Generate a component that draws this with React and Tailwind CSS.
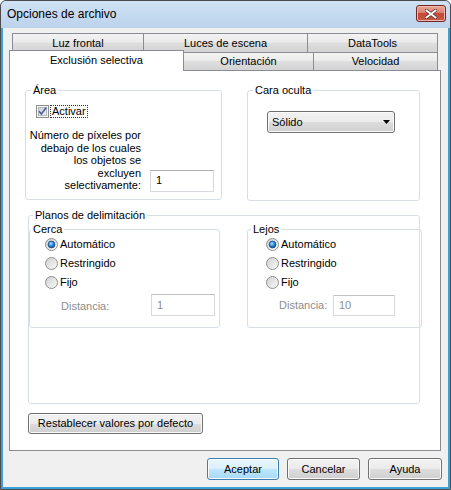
import React from "react";

const tabBg = "bg-[linear-gradient(#f3f3f3,#ebebeb_45%,#dedede_50%,#d3d3d3)]";
const btnBg = "bg-[linear-gradient(#f2f2f2,#ebebeb_50%,#dddddd_50%,#cfcfcf)]";
const defBg = "bg-[linear-gradient(#eaf6fd,#d9f0fc_50%,#bee6fd_50%,#a7d9f5)]";

const Checkbox = () => (
    <svg width="13" height="13" viewBox="0 0 13 13" className="shrink-0">
        <defs>
            <linearGradient id="cbfill" x1="0" y1="0" x2="1" y2="1">
                <stop offset="0" stopColor="#c9cdd2" />
                <stop offset="1" stopColor="#f4f4f4" />
            </linearGradient>
        </defs>
        <rect x="0.5" y="0.5" width="12" height="12" fill="#f6f6f6" stroke="#8e8f8f" />
        <rect x="2.5" y="2.5" width="8" height="8" fill="url(#cbfill)" stroke="#b4b8bd" />
        <path d="M3 6.3 L5.4 9 L10.2 2.6" fill="none" stroke="#4b62a3" strokeWidth="1.7" />
    </svg>
);

const Radio = ({ checked }) => (
    <svg width="13" height="13" viewBox="0 0 13 13" className="shrink-0">
        <defs>
            <linearGradient id="rbfill" x1="0" y1="0" x2="1" y2="1">
                <stop offset="0" stopColor="#cfcfcf" />
                <stop offset="1" stopColor="#fbfbfb" />
            </linearGradient>
            <radialGradient id="rbdot" cx="0.4" cy="0.35" r="0.75">
                <stop offset="0" stopColor="#a6e0ff" />
                <stop offset="0.5" stopColor="#2a8ade" />
                <stop offset="1" stopColor="#0b3f7c" />
            </radialGradient>
        </defs>
        <circle cx="6.5" cy="6.5" r="6" fill="url(#rbfill)" stroke="#8e8f8f" />
        {checked && (
            <circle cx="6.5" cy="6.5" r="3.4" fill="url(#rbdot)" stroke="#19467e" strokeWidth="0.8" />
        )}
    </svg>
);

const Group = ({ label, labelLeft, className, children }) => (
    <div className={`relative border border-[#d5dfe5] rounded-[3px] shrink-0 ${className}`}>
        <span className={`absolute -top-[7px] bg-white px-[2px] leading-[13px] ${labelLeft}`}>
            {label}
        </span>
        {children}
    </div>
);

const TextBox = ({ value, disabled, className }) => (
    <div
        className={`flex items-center pl-[5px] bg-white border shrink-0 ${
            disabled
                ? "border-[#d9d9d9] border-t-[#c2c2c2] text-[#8d8d8d]"
                : "border-[#d5d9df] border-t-[#abadb3]"
        } ${className}`}
    >
        {value}
    </div>
);

const RadioRow = ({ label, checked }) => (
    <div className="h-[19px] flex items-center gap-[2px]">
        <Radio checked={checked} />
        <span>{label}</span>
    </div>
);

const Button = ({ label, isDefault, className }) => (
    <div
        className={`flex items-center justify-center rounded-[3px] border shadow-[inset_0_0_0_1px_#fbfbfb] shrink-0 ${
            isDefault ? `border-[#3c7fb1] ${defBg}` : `border-[#707070] ${btnBg}`
        } ${className}`}
    >
        {label}
    </div>
);

const CloseButton = () => (
    <div className="self-start mt-[4px] w-[30px] h-[17px] rounded-[3px] border border-[#6e2a22] bg-[linear-gradient(#e9a797,#d98272_45%,#c7493a_50%,#c45a45)] shadow-[inset_0_0_0_1px_#f1b8a9] flex items-center justify-center">
        <svg width="12" height="10" viewBox="0 0 12 10">
            <path d="M1.5 1.5 L10.5 8.5 M10.5 1.5 L1.5 8.5" stroke="#5a2a24" strokeWidth="3.4" strokeLinecap="square" />
            <path d="M1.5 1.5 L10.5 8.5 M10.5 1.5 L1.5 8.5" stroke="#ffffff" strokeWidth="1.9" strokeLinecap="square" />
        </svg>
    </div>
);

const Tab = ({ label, className }) => (
    <div
        className={`flex items-center justify-center border border-b-0 border-[#898c95] shrink-0 ${tabBg} ${className}`}
    >
        {label}
    </div>
);

const pixelLines = [
    "Número de píxeles por",
    "debajo de los cuales",
    "los objetos se",
    "excluyen",
    "selectivamente:",
];

export default function App() {
    return (
        <div className="w-[451px] h-[490px] bg-white font-['Liberation_Sans',Arial,sans-serif] text-[11px] leading-[13px] text-black">
            <div className="w-[451px] h-[490px] flex flex-col border border-[#4b4b4b] rounded-t-[6px] overflow-hidden bg-[#3aa0dc]">
                {/* title bar */}
                <div className="h-[27px] shrink-0 flex items-center justify-between pl-[6px] pr-[4px] bg-[linear-gradient(#d0e1f4,#bcd3ec)]">
                    <span className="text-[12px] leading-[15px]">Opciones de archivo</span>
                    <CloseButton />
                </div>

                <div className="flex-1 mx-[2px] mb-[2px] bg-[#f0f0f0] flex flex-col">
                    {/* tabs */}
                    <div className="mt-[5px] ml-[6px] w-[432px] flex flex-col">
                        <div className="flex h-[19px] pl-[3px]">
                            <Tab label="Luz frontal" className="w-[132px]" />
                            <Tab label="Luces de escena" className="-ml-px w-[165px]" />
                            <Tab label="DataTools" className="-ml-px w-[131px]" />
                        </div>
                        <div className="flex items-end h-[18px]">
                            <div className="relative z-10 w-[175px] h-[21px] -mb-px border border-b-0 border-[#898c95] bg-white flex items-center justify-center pb-[1px]">
                                Exclusión selectiva
                            </div>
                            <Tab label="Orientación" className="-ml-px w-[131px] h-[18px]" />
                            <Tab label="Velocidad" className="-ml-px w-[125px] h-[18px]" />
                        </div>
                    </div>

                    {/* panel */}
                    <div className="ml-[6px] w-[432px] h-[381px] border border-[#898c95] bg-white flex flex-col">
                        <div className="flex items-start mt-[19px]">
                            <Group label="Área" labelLeft="left-[5px]" className="ml-[15px] w-[197px] h-[110px]">
                                <div className="mt-[14px] pl-[10px] flex items-center h-[13px]">
                                    <Checkbox />
                                    <span className="ml-[1px] border border-dotted border-[#333] px-[1px] leading-[11px]">
                                        Activar
                                    </span>
                                </div>
                                <div className="flex items-end mt-[11px]">
                                    <div className="w-[115px] flex flex-col items-end leading-[12.5px]">
                                        {pixelLines.map((line) => (
                                            <div key={line} className="whitespace-nowrap">
                                                {line}
                                            </div>
                                        ))}
                                    </div>
                                    <TextBox value="1" className="ml-[9px] w-[64px] h-[22px]" />
                                </div>
                            </Group>
                            <Group label="Cara oculta" labelLeft="left-[5px]" className="ml-[25px] w-[173px] h-[111px]">
                                <div className={`mt-[20px] ml-[19px] w-[128px] h-[22px] rounded-[3px] border border-[#707070] shadow-[inset_0_0_0_1px_#fbfbfb] ${btnBg} flex items-center justify-between pl-[4px] pr-[4px]`}>
                                    <span>Sólido</span>
                                    <svg width="7" height="4" viewBox="0 0 7 4">
                                        <polygon points="0,0 7,0 3.5,4" fill="#000" />
                                    </svg>
                                </div>
                            </Group>
                        </div>

                        <Group label="Planos de delimitación" labelLeft="left-[4px]" className="mt-[14px] ml-[18px] w-[392px] h-[189px]">
                            <div className="flex items-start mt-[13px]">
                                <Group label="Cerca" labelLeft="left-[1px]" className="w-[191px] h-[99px]">
                                    <div className="mt-[5px] pl-[15px] flex flex-col">
                                        <RadioRow label="Automático" checked />
                                        <RadioRow label="Restringido" />
                                        <RadioRow label="Fijo" />
                                    </div>
                                    <div className="mt-[2px] pl-[31px] flex items-center">
                                        <span className="w-[90px] text-[#8d8d8d] pt-[2px]">Distancia:</span>
                                        <TextBox value="1" disabled className="w-[64px] h-[22px]" />
                                    </div>
                                </Group>
                                <Group label="Lejos" labelLeft="left-[3px]" className="ml-[27px] w-[175px] h-[99px]">
                                    <div className="mt-[5px] pl-[18px] flex flex-col">
                                        <RadioRow label="Automático" checked />
                                        <RadioRow label="Restringido" />
                                        <RadioRow label="Fijo" />
                                    </div>
                                    <div className="mt-[3px] pl-[31px] flex items-center">
                                        <span className="w-[54px] text-[#8d8d8d]">Distancia:</span>
                                        <TextBox value="10" disabled className="w-[62px] h-[21px]" />
                                    </div>
                                </Group>
                            </div>
                        </Group>

                        <Button label="Restablecer valores por defecto" className="mt-[9px] ml-[18px] w-[175px] h-[21px]" />
                    </div>

                    {/* dialog buttons */}
                    <div className="mt-[7px] flex justify-end gap-[8px] pr-[6px]">
                        <Button label="Aceptar" isDefault className="w-[72px] h-[22px]" />
                        <Button label="Cancelar" className="w-[73px] h-[22px]" />
                        <Button label="Ayuda" className="w-[74px] h-[22px]" />
                    </div>
                </div>
            </div>
        </div>
    );
}
